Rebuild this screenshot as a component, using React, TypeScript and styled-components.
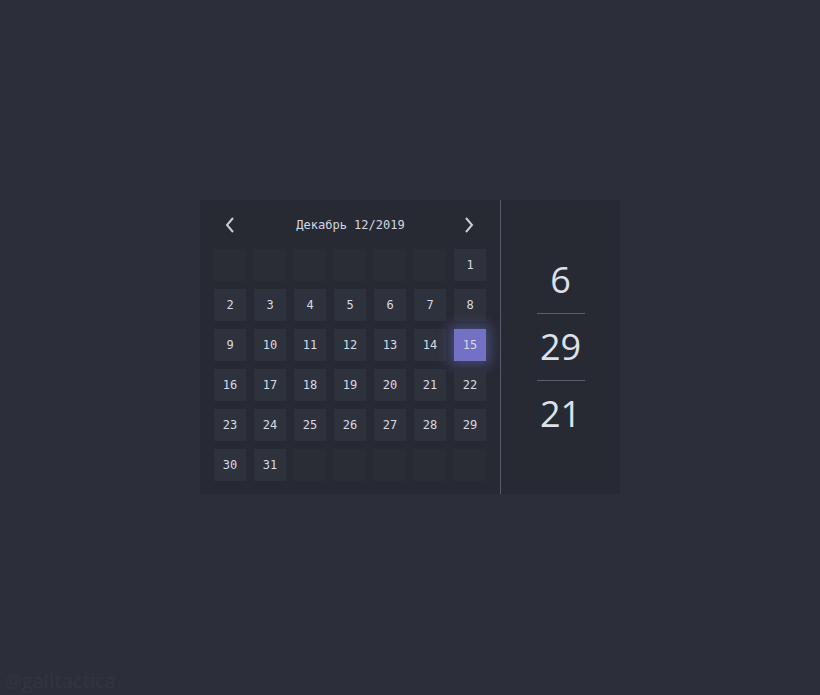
import React from "react";
import styled, { createGlobalStyle } from "styled-components";

const Global = createGlobalStyle`
  html, body { margin: 0; padding: 0; background: #2c2f39; }
  body { width: 820px; height: 695px; overflow: hidden; font-family: "DejaVu Sans Mono", monospace; }
`;

const Page = styled.div`
  width: 820px;
  height: 695px;
  display: flex;
  flex-direction: column;
  align-items: flex-start;
  box-sizing: border-box;
  padding: 200px 0 0 200px;
  position: relative;
`;

const Card = styled.div`
  display: flex;
  width: 420px;
  height: 294px;
  background: #272a33;
`;

const Calendar = styled.div`
  width: 301px;
  box-sizing: border-box;
  padding: 14px 14px 13px 14px;
  border-right: 1px solid #595c6b;
  display: flex;
  flex-direction: column;
  gap: 13px;
`;

const Header = styled.div`
  height: 22px;
  display: flex;
  align-items: center;
  justify-content: space-between;
  padding: 0 9px 0 8px;
`;

const Title = styled.div`
  font-family: "DejaVu Sans Mono", monospace;
  font-size: 12px;
  color: #d3d7e0;
  padding-left: 2px;
`;

const ArrowBtn = styled.button`
  background: none;
  border: 0;
  padding: 0;
  width: 16px;
  height: 18px;
  display: flex;
  align-items: center;
  justify-content: center;
  cursor: pointer;
`;

const Grid = styled.div`
  display: grid;
  grid-template-columns: repeat(7, 32px);
  grid-auto-rows: 32px;
  gap: 8px;
`;

const Cell = styled.div<{ $empty?: boolean; $active?: boolean }>`
  display: flex;
  align-items: center;
  justify-content: center;
  font-family: "DejaVu Sans Mono", monospace;
  font-size: 12px;
  color: #d6dae3;
  background: ${(p) => (p.$active ? "#7271c6" : p.$empty ? "#2a2d36" : "#2e323c")};
  box-shadow: ${(p) => (p.$active ? "0 0 12px 4px rgba(114, 113, 198, 0.45)" : "none")};
`;

const Time = styled.div`
  flex: 1;
  display: flex;
  flex-direction: column;
  align-items: center;
  justify-content: center;
`;

const Num = styled.div`
  font-family: "Open Sans", "Noto Sans", sans-serif;
  font-size: 36px;
  line-height: 66px;
  height: 66px;
  color: #dde1ea;
`;

const Rule = styled.div`
  width: 48px;
  height: 1px;
  background: #5a5d6b;
`;

const Watermark = styled.div`
  position: absolute;
  left: 5px;
  bottom: 5px;
  font-family: "Open Sans", sans-serif;
  font-size: 19px;
  font-weight: 600;
  line-height: 18px;
  color: #31343e;
`;

const Chevron = ({ dir }: { dir: "left" | "right" }) => (
  <svg width="10" height="16" viewBox="0 0 10 16">
    <path
      d={dir === "left" ? "M8 1 L2 8 L8 15" : "M2 1 L8 8 L2 15"}
      fill="none"
      stroke="#c9cdd6"
      strokeWidth="2"
    />
  </svg>
);

export default function App() {
  const cells: (number | null)[] = [];
  for (let i = 0; i < 6; i++) cells.push(null);
  for (let d = 1; d <= 31; d++) cells.push(d);
  while (cells.length < 42) cells.push(null);

  return (
    <Page>
      <Global />
      <Card>
        <Calendar>
          <Header>
            <ArrowBtn aria-label="prev">
              <Chevron dir="left" />
            </ArrowBtn>
            <Title>Декабрь 12/2019</Title>
            <ArrowBtn aria-label="next">
              <Chevron dir="right" />
            </ArrowBtn>
          </Header>
          <Grid>
            {cells.map((d, i) => (
              <Cell key={i} $empty={d === null} $active={d === 15}>
                {d ?? ""}
              </Cell>
            ))}
          </Grid>
        </Calendar>
        <Time>
          <Num>6</Num>
          <Rule />
          <Num>29</Num>
          <Rule />
          <Num>21</Num>
        </Time>
      </Card>
      <Watermark>@galltactica</Watermark>
    </Page>
  );
}
